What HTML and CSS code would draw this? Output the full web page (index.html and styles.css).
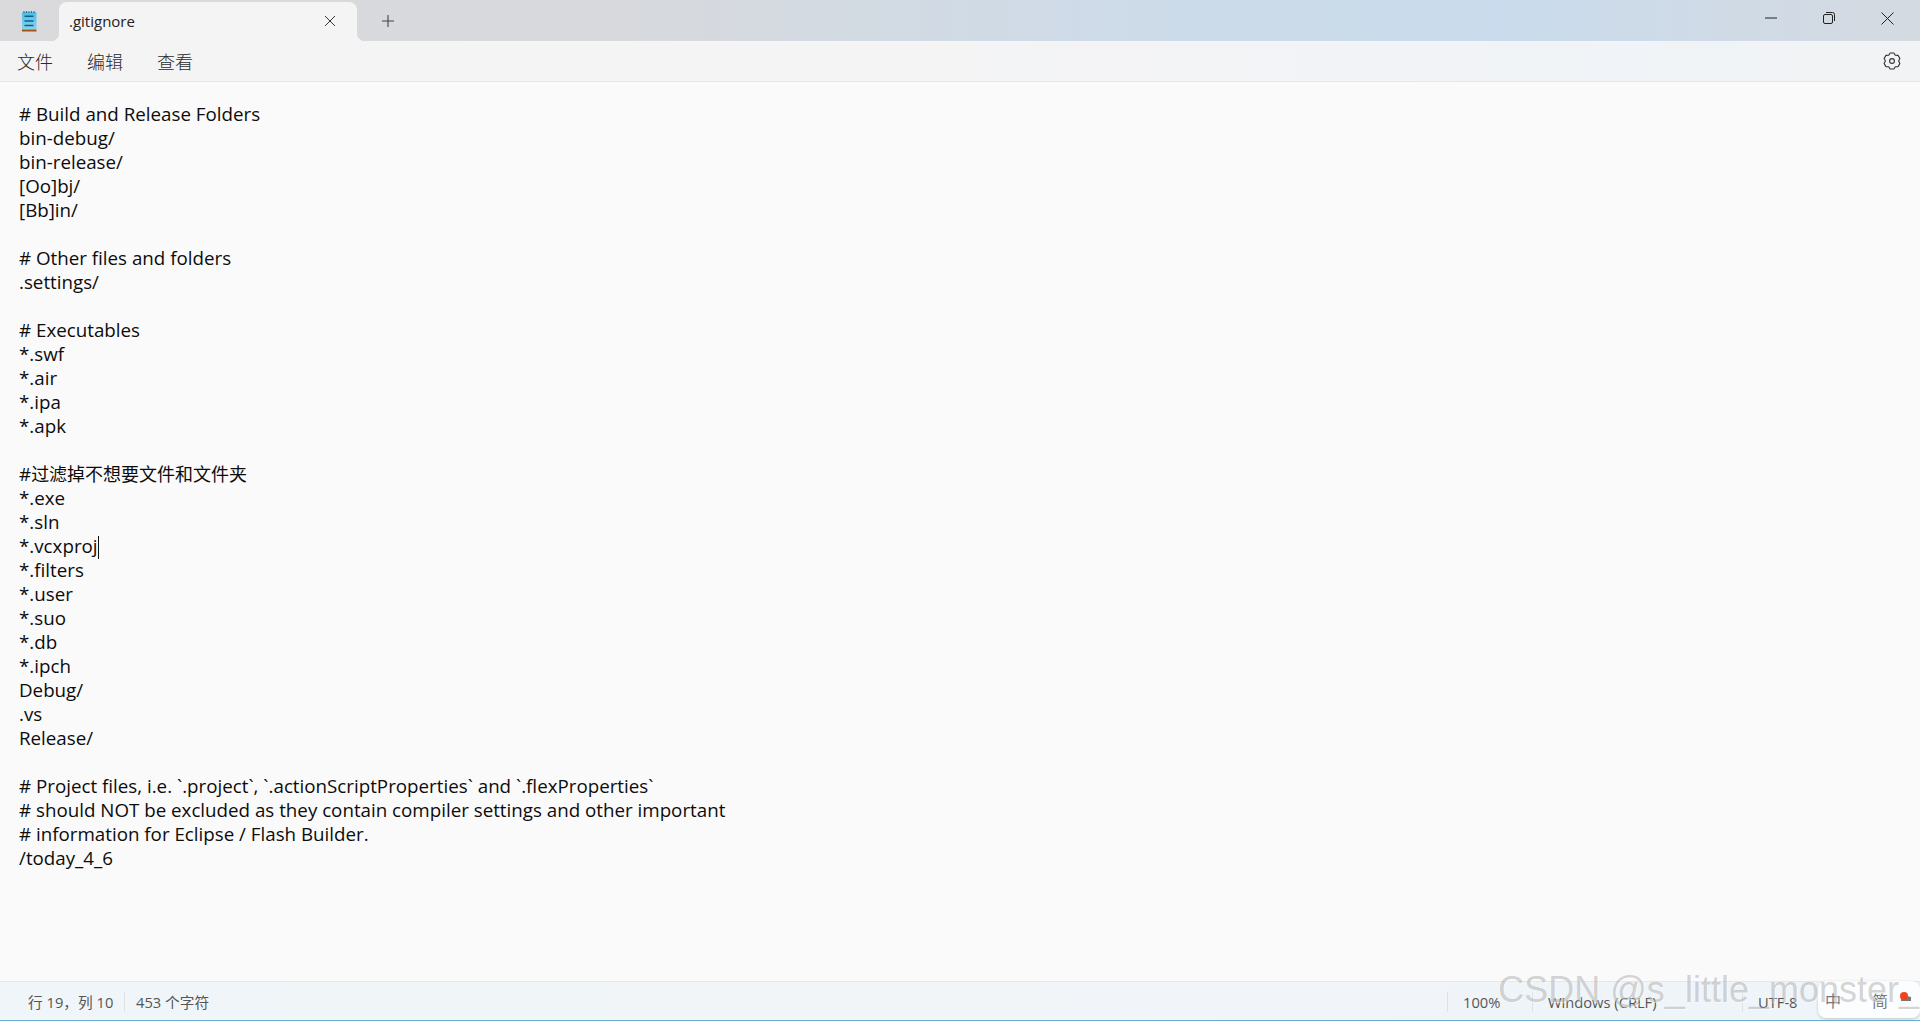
FILE: index.html
```
<!DOCTYPE html>
<html lang="zh">
<head>
<meta charset="utf-8">
<title>.gitignore</title>
<link rel="stylesheet" href="styles.css">
</head>
<body>
<div class="app">
  <header class="titlebar">
    <div class="app-icon">
      <svg width="16" height="22" viewBox="0 0 16 22"><defs><linearGradient id="pad" x1="0" y1="0" x2="0" y2="1"><stop offset="0" stop-color="#4fbde6"/><stop offset="1" stop-color="#86d4ef"/></linearGradient></defs><rect x="1" y="2" width="14.5" height="17.5" rx="1.2" fill="url(#pad)"/><rect x="1" y="19.5" width="14.5" height="2" fill="#a8500f"/><path d="M3 1v2M5.5 1v2M8 1v2M10.5 1v2M13 1v2" stroke="#2a6f96" stroke-width="1"/><path d="M3.5 6.2h9M3.5 11h9M3.5 15.5h9" stroke="#0f5f8c" stroke-width="1.4"/></svg>
    </div>
    <div class="tab">
      <span class="tab-title">.gitignore</span>
      <svg class="tab-close" width="12" height="12" viewBox="0 0 12 12"><path d="M1 1l10 10M11 1L1 11" stroke="#333" stroke-width="1"/></svg>
    </div>
    <div class="new-tab">
      <svg width="14" height="14" viewBox="0 0 14 14"><path d="M7 1v12M1 7h12" stroke="#444" stroke-width="1.1"/></svg>
    </div>
    <div class="window-controls">
      <svg width="12" height="12" viewBox="0 0 12 12"><path d="M0 6h12" stroke="#222" stroke-width="1"/></svg>
      <svg width="12" height="12" viewBox="0 0 12 12"><rect x=".5" y="2.5" width="9" height="9" rx="1.5" fill="none" stroke="#222"/><path d="M3 .5h6.5a2 2 0 0 1 2 2V9" fill="none" stroke="#222"/></svg>
      <svg width="13" height="13" viewBox="0 0 13 13"><path d="M.5.5l12 12M12.5.5l-12 12" stroke="#222" stroke-width="1"/></svg>
    </div>
  </header>
  <nav class="menubar">
    <span class="menu-item">文件</span>
    <span class="menu-item">编辑</span>
    <span class="menu-item">查看</span>
    <svg class="settings" width="18" height="18" viewBox="0 0 24 24" fill="none" stroke="#333" stroke-width="1.5" stroke-linejoin="round"><circle cx="12" cy="12" r="3.2"/><path d="M14.47 1.28L9.53 1.28L7.6 4.38L3.96 4.5L1.48 8.78L3.2 12L1.48 15.22L3.96 19.5L7.6 19.62L9.53 22.72L14.47 22.72L16.4 19.62L20.04 19.5L22.52 15.22L20.8 12L22.52 8.78L20.04 4.5L16.4 4.38Z"/></svg>
  </nav>
  <main class="editor"><pre class="text"># Build and Release Folders
bin-debug/
bin-release/
[Oo]bj/
[Bb]in/

# Other files and folders
.settings/

# Executables
*.swf
*.air
*.ipa
*.apk

#<span class="cjk">过滤掉不想要文件和文件夹</span>
*.exe
*.sln
*.vcxproj<span class="caret"></span>
*.filters
*.user
*.suo
*.db
*.ipch
Debug/
.vs
Release/

# Project files, i.e. `.project`, `.actionScriptProperties` and `.flexProperties`
# should NOT be excluded as they contain compiler settings and other important
# information for Eclipse / Flash Builder.
/today_4_6</pre></main>
  <footer class="statusbar">
    <span class="st st-pos">行 19，列 10</span>
    <span class="st st-count">453 个字符</span>
    <span class="st st-zoom">100%</span>
    <span class="st st-eol">Windows (CRLF)</span>
    <span class="st st-enc">UTF-8</span>
  </footer>
  <div class="taskbar-strip"></div>
  <div class="ime">
    <span class="ime-text">中</span><span class="ime-text">简</span>
    <svg class="ime-icon" width="16" height="14" viewBox="0 0 16 14"><path d="M3 12V6l4-3 2 4 4 1v4z" fill="#777"/></svg>
    <span class="ime-dot"></span>
  </div>
  <div class="watermark">CSDN @s_little_monster_</div>
</div>
</body>
</html>
```
FILE: styles.css
```
* { box-sizing: border-box; }
html, body { margin: 0; height: 100%; overflow: hidden; }
body { font-family: "Open Sans", "Noto Sans CJK SC", sans-serif; color: #1a1a1a; }
.app { position: relative; display: flex; flex-direction: column; height: 1021px; background: #fafafa; }
.titlebar {
  height: 41px; flex: none; display: flex; align-items: flex-end;
  background: linear-gradient(90deg, #dadadc 0%, #d8d9dc 30%, #cddbe9 60%, #c9dbec 78%, #d5dae1 100%);
}
.app-icon { width: 59px; height: 41px; display: flex; align-items: center; justify-content: center; padding-right: 2px; }
.app-icon svg { display: block; }
.tab {
  position: relative; width: 298px; height: 39px; background: #f4f4f5; border-radius: 8px 8px 0 0;
  display: flex; align-items: center; justify-content: space-between; padding: 0 21px 2px 10px;
}
.tab::before, .tab::after {
  content: ""; position: absolute; bottom: 0; width: 8px; height: 8px;
}
.tab::before { left: -8px; background: radial-gradient(circle at 0 0, transparent 8px, #f4f4f5 8.5px); }
.tab::after { right: -8px; background: radial-gradient(circle at 100% 0, transparent 8px, #f4f4f5 8.5px); }
.tab-title { font-size: 15px; color: #222; }
.new-tab { width: 62px; height: 41px; display: flex; align-items: center; justify-content: center; }
.window-controls { margin-left: auto; height: 41px; padding: 0 26px 5px 0; display: flex; align-items: center; gap: 46px; }
.menubar {
  height: 41px; flex: none; display: flex; align-items: center; padding: 0 19px 0 17px; gap: 34px;
  background: linear-gradient(90deg, #f4f4f5 0%, #f4f4f5 50%, #f0f3f7 85%, #f2f3f5 100%);
  border-bottom: 1px solid #e6e6e6;
}
.menu-item { font-size: 18px; color: #2a2a2a; font-family: "Noto Sans CJK SC", sans-serif; font-weight: 300; }
.settings { margin-left: auto; }
.editor { flex: 1; padding: 20px 19px 0; overflow: hidden; }
.text {
  margin: 0; font-family: "Open Sans", "Noto Sans CJK SC", sans-serif; font-size: 18.75px; line-height: 24px; color: #0c0c0c; white-space: pre;
}
.cjk { font-family: "Noto Sans CJK SC", sans-serif; font-size: 18px; line-height: 0; }
.caret { position: relative; display: inline-block; width: 1px; height: 0; }
.caret::after { content: ""; position: absolute; left: 0; bottom: -6px; width: 1px; height: 23px; background: #111; }
.statusbar {
  height: 39px; flex: none; display: flex; align-items: center; padding: 1px 0 0 28px;
  background: linear-gradient(90deg, #eff5f9 0%, #f2f5f8 50%, #eef4f9 100%);
  border-top: 1px solid #e4e6e8; font-size: 14.7px; color: #555;
  font-family: "Open Sans", "Noto Sans CJK SC", sans-serif;
}
.st { height: 20px; line-height: 20px; white-space: nowrap; }
.st-pos { width: 97px; border-right: 1px solid #dfe2e5; }
.st-count { padding-left: 11px; }
.st-zoom { margin-left: auto; width: 86px; padding-left: 15px; border-left: 1px solid #dfe2e5; border-right: 1px solid #dfe2e5; }
.st-eol { width: 210px; padding-left: 15px; border-right: 1px solid #dfe2e5; }
.st-enc { width: 177px; padding-left: 15px; }
.taskbar-strip { height: 1px; flex: none; background: #6bb0d4; }
.watermark {
  position: absolute; right: 1px; bottom: 9px; font-family: "Liberation Sans", sans-serif; font-size: 36px; line-height: 44px;
  color: rgba(110,110,110,.3); text-shadow: 1px 1px 1px rgba(255,255,255,.5); white-space: nowrap;
}
.ime {
  position: absolute; right: 0; bottom: 3px; width: 102px; height: 37px; border-radius: 8px;
  background: rgba(255,255,255,.8); box-shadow: 0 1px 3px rgba(0,0,0,.2); display: flex; align-items: center; gap: 31px; padding: 0 0 0 7px;
  font-family: "Noto Sans CJK SC", sans-serif; font-size: 16px; color: #777;
}
.ime-icon { position: absolute; right: 6px; top: 8px; }
.ime-dot { position: absolute; right: 12px; top: 11px; width: 8px; height: 8px; border-radius: 50%; background: #f4421c; }
```
